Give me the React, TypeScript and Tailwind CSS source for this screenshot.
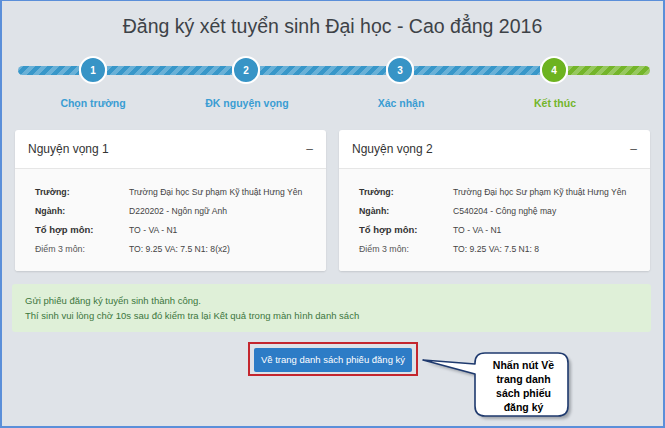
import React from 'react';

const stripeBlue =
  'bg-[#3897c9] bg-[linear-gradient(135deg,rgba(255,255,255,.25)_25%,transparent_25%,transparent_50%,rgba(255,255,255,.25)_50%,rgba(255,255,255,.25)_75%,transparent_75%,transparent)] bg-[length:12px_12px]';
const stripeGreen =
  'bg-[#74b52a] bg-[linear-gradient(135deg,rgba(255,255,255,.25)_25%,transparent_25%,transparent_50%,rgba(255,255,255,.25)_50%,rgba(255,255,255,.25)_75%,transparent_75%,transparent)] bg-[length:12px_12px]';

const steps = [
  { n: 1, label: 'Chọn trường', done: false },
  { n: 2, label: 'ĐK nguyện vọng', done: false },
  { n: 3, label: 'Xác nhận', done: false },
  { n: 4, label: 'Kết thúc', done: true },
];

const cards = [
  {
    title: 'Nguyện vọng 1',
    truong: 'Trường Đại học Sư phạm Kỹ thuật Hưng Yên',
    nganh: 'D220202 - Ngôn ngữ Anh',
    tohop: 'TO - VA - N1',
    diem: 'TO: 9.25 VA: 7.5 N1: 8(x2)',
  },
  {
    title: 'Nguyện vọng 2',
    truong: 'Trường Đại học Sư phạm Kỹ thuật Hưng Yên',
    nganh: 'C540204 - Công nghệ may',
    tohop: 'TO - VA - N1',
    diem: 'TO: 9.25 VA: 7.5 N1: 8',
  },
];

const Circle = ({ n, green }: { n: number; green?: boolean }) => (
  <div
    className={`w-[28px] h-[28px] shrink-0 rounded-full border-2 border-white flex items-center justify-center text-white text-[10px] font-bold ${
      green ? 'bg-[#6db320]' : 'bg-[#3794c6]'
    }`}
  >
    {n}
  </div>
);

const Row = ({ label, value, strong, big }: { label: string; value: string; strong?: boolean; big?: boolean }) => (
  <div className="flex items-center h-[19px] whitespace-nowrap">
    <div
      className={`w-[94px] shrink-0 ${strong ? 'font-bold text-[#333]' : 'text-[#555]'} ${big ? 'text-[9.5px]' : 'text-[8.8px]'}`}
    >
      {label}
    </div>
    <div className="text-[8.6px] text-[#444]">{value}</div>
  </div>
);

const Card = ({ c }: { c: (typeof cards)[number] }) => (
  <div className="w-[311px] bg-white rounded-[3px] shadow-[0_1px_2px_rgba(0,0,0,0.12)] overflow-hidden">
    <div className="h-[39px] px-[13px] flex items-center justify-between border-b border-[#e6e6e6]">
      <span className="text-[12px] text-[#333]">{c.title}</span>
      <span className="text-[12px] text-[#555] leading-none">–</span>
    </div>
    <div className="bg-[#fafafa] pl-[20px] pt-[14px] pb-[12px]">
      <Row label="Trường:" value={c.truong} strong />
      <Row label="Ngành:" value={c.nganh} strong />
      <Row label="Tổ hợp môn:" value={c.tohop} strong big />
      <Row label="Điểm 3 môn:" value={c.diem} />
    </div>
  </div>
);

export default function App() {
  return (
    <div className="relative w-[665px] h-[428px] overflow-hidden bg-[#dfe3e8] border-l-2 border-r-2 border-t border-b-2 border-[#5b8fd9] font-['Liberation_Sans',Arial,sans-serif]">
      <h1 className="pt-[11px] text-center text-[19.5px] leading-[28px] text-[#3d4247]">
        Đăng ký xét tuyển sinh Đại học - Cao đẳng 2016
      </h1>

      {/* stepper */}
      <div className="mt-[16px] pl-[16px] flex items-center h-[28px]">
        <div className={`w-[61px] h-[9px] rounded-l-full ${stripeBlue}`} />
        <Circle n={1} />
        <div className={`w-[125px] h-[9px] ${stripeBlue}`} />
        <Circle n={2} />
        <div className={`w-[126px] h-[9px] ${stripeBlue}`} />
        <Circle n={3} />
        <div className={`w-[126px] h-[9px] ${stripeBlue}`} />
        <Circle n={4} green />
        <div className={`w-[82px] h-[9px] rounded-r-full ${stripeGreen}`} />
      </div>

      <div className="mt-[11px] pl-[14px] flex">
        {steps.map((s) => (
          <div
            key={s.n}
            className={`w-[154px] text-center text-[10.5px] leading-[16px] font-bold ${
              s.done ? 'text-[#73b52a]' : 'text-[#3a9dd3]'
            }`}
          >
            {s.label}
          </div>
        ))}
      </div>

      {/* cards */}
      <div className="mt-[19px] pl-[13px] flex gap-[13px]">
        {cards.map((c) => (
          <Card key={c.title} c={c} />
        ))}
      </div>

      {/* alert */}
      <div className="mt-[13px] ml-[10px] w-[639px] bg-[#dff0d8] rounded-[3px] pl-[13px] py-[9px] text-[9.5px] leading-[15px] text-[#3c763d]">
        <div>Gửi phiếu đăng ký tuyển sinh thành công.</div>
        <div>Thí sinh vui lòng chờ 10s sau đó kiểm tra lại Kết quả trong màn hình danh sách</div>
      </div>

      {/* button */}
      <div className="mt-[10px] ml-[246px] flex">
        <div className="border-2 border-[#c4262e] px-[4px] py-[2px]">
          <button className="w-[158px] h-[24px] bg-[#2d7cc6] rounded-[2px] text-white text-[9.5px] whitespace-nowrap">
            Về trang danh sách phiếu đăng ký
          </button>
        </div>
      </div>

      {/* callout annotation */}
      <svg
        className="absolute left-[-2px] top-[-1px] pointer-events-none"
        width="665"
        height="428"
        viewBox="0 0 665 428"
      >
        <defs>
          <filter id="sh" x="-20%" y="-20%" width="140%" height="140%">
            <feGaussianBlur stdDeviation="1.5" />
          </filter>
        </defs>
        <path
          d="M485,353 H558 Q568,353 568,363 V406 Q568,416 558,416 H485 Q475,416 475,406 V374 L423,360 L475,364 V363 Q475,353 485,353 Z"
          fill="#6b7078"
          opacity="0.55"
          transform="translate(3,3)"
          filter="url(#sh)"
        />
        <path
          d="M485,353 H558 Q568,353 568,363 V406 Q568,416 558,416 H485 Q475,416 475,406 V374 L423,360 L475,364 V363 Q475,353 485,353 Z"
          fill="#ffffff"
          stroke="#1f3a6e"
          strokeWidth="1.6"
          strokeLinejoin="round"
        />
      </svg>
      <div className="absolute left-[474px] top-[357px] w-[95px] text-center text-[10.5px] leading-[14px] font-bold text-black">
        Nhấn nút Về
        <br />
        trang danh
        <br />
        sách phiếu
        <br />
        đăng ký
      </div>
    </div>
  );
}
